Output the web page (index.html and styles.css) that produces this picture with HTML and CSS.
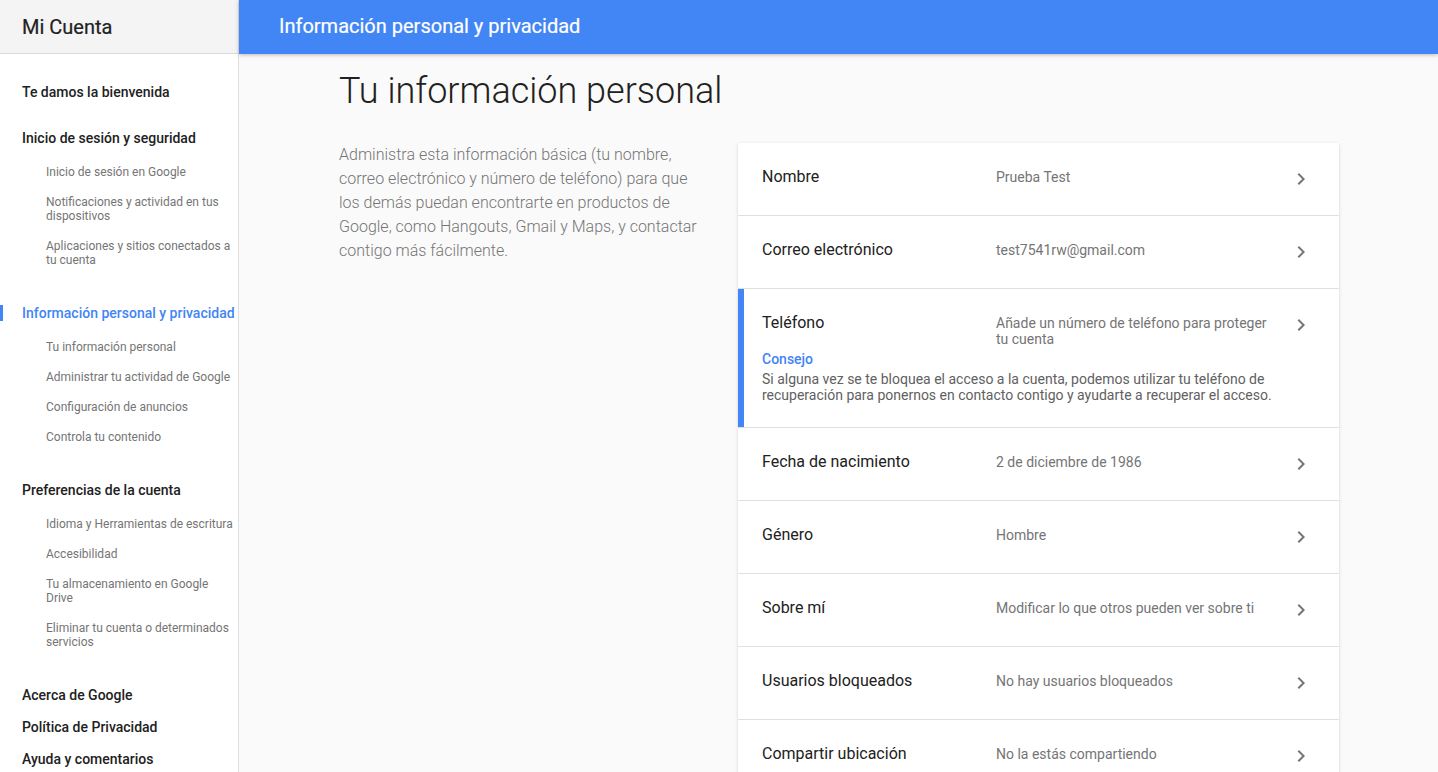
FILE: index.html
```html
<!DOCTYPE html>
<html lang="es">
<head>
<meta charset="utf-8">
<title>Mi Cuenta</title>
<link rel="stylesheet" href="styles.css">
</head>
<body>
<div class="app">
  <aside class="sidebar">
    <div class="brand">Mi Cuenta</div>
    <nav class="nav">
      <div class="group">
        <a class="group-title">Te damos la bienvenida</a>
      </div>
      <div class="group">
        <a class="group-title">Inicio de sesión y seguridad</a>
        <ul class="sub">
          <li>Inicio de sesión en Google</li>
          <li>Notificaciones y actividad en tus dispositivos</li>
          <li>Aplicaciones y sitios conectados a tu cuenta</li>
        </ul>
      </div>
      <div class="group">
        <a class="group-title active">Información personal y privacidad</a>
        <ul class="sub">
          <li>Tu información personal</li>
          <li>Administrar tu actividad de Google</li>
          <li>Configuración de anuncios</li>
          <li>Controla tu contenido</li>
        </ul>
      </div>
      <div class="group">
        <a class="group-title">Preferencias de la cuenta</a>
        <ul class="sub">
          <li>Idioma y Herramientas de escritura</li>
          <li>Accesibilidad</li>
          <li>Tu almacenamiento en Google Drive</li>
          <li>Eliminar tu cuenta o determinados servicios</li>
        </ul>
      </div>
      <div class="group links">
        <a class="group-title">Acerca de Google</a>
        <a class="group-title">Política de Privacidad</a>
        <a class="group-title">Ayuda y comentarios</a>
      </div>
    </nav>
  </aside>
  <div class="main">
    <header class="topbar">Información personal y privacidad</header>
    <div class="content">
      <h1 class="page-title">Tu información personal</h1>
      <div class="columns">
        <p class="intro">Administra esta información básica (tu nombre, correo electrónico y número de teléfono) para que los demás puedan encontrarte en productos de Google, como Hangouts, Gmail y Maps, y contactar contigo más fácilmente.</p>
        <div class="card">
          <div class="row">
            <div class="label">Nombre</div>
            <div class="value">Prueba Test</div>
            <svg class="chev" viewBox="0 0 24 24"><path d="M10 6L8.59 7.41 13.17 12l-4.58 4.59L10 18l6-6z"/></svg>
          </div>
          <div class="row">
            <div class="label">Correo electrónico</div>
            <div class="value">test7541rw@gmail.com</div>
            <svg class="chev" viewBox="0 0 24 24"><path d="M10 6L8.59 7.41 13.17 12l-4.58 4.59L10 18l6-6z"/></svg>
          </div>
          <div class="row highlight">
            <div class="label">Teléfono</div>
            <div class="value">Añade un número de teléfono para proteger tu cuenta</div>
            <svg class="chev" viewBox="0 0 24 24"><path d="M10 6L8.59 7.41 13.17 12l-4.58 4.59L10 18l6-6z"/></svg>
            <div class="tip">
              <div class="tip-title">Consejo</div>
              <div class="tip-text">Si alguna vez se te bloquea el acceso a la cuenta, podemos utilizar tu teléfono de recuperación para ponernos en contacto contigo y ayudarte a recuperar el acceso.</div>
            </div>
          </div>
          <div class="row">
            <div class="label">Fecha de nacimiento</div>
            <div class="value">2 de diciembre de 1986</div>
            <svg class="chev" viewBox="0 0 24 24"><path d="M10 6L8.59 7.41 13.17 12l-4.58 4.59L10 18l6-6z"/></svg>
          </div>
          <div class="row">
            <div class="label">Género</div>
            <div class="value">Hombre</div>
            <svg class="chev" viewBox="0 0 24 24"><path d="M10 6L8.59 7.41 13.17 12l-4.58 4.59L10 18l6-6z"/></svg>
          </div>
          <div class="row">
            <div class="label">Sobre mí</div>
            <div class="value">Modificar lo que otros pueden ver sobre ti</div>
            <svg class="chev" viewBox="0 0 24 24"><path d="M10 6L8.59 7.41 13.17 12l-4.58 4.59L10 18l6-6z"/></svg>
          </div>
          <div class="row">
            <div class="label">Usuarios bloqueados</div>
            <div class="value">No hay usuarios bloqueados</div>
            <svg class="chev" viewBox="0 0 24 24"><path d="M10 6L8.59 7.41 13.17 12l-4.58 4.59L10 18l6-6z"/></svg>
          </div>
          <div class="row">
            <div class="label">Compartir ubicación</div>
            <div class="value">No la estás compartiendo</div>
            <svg class="chev" viewBox="0 0 24 24"><path d="M10 6L8.59 7.41 13.17 12l-4.58 4.59L10 18l6-6z"/></svg>
          </div>
        </div>
      </div>
    </div>
  </div>
</div>
</body>
</html>
```

FILE: styles.css
```css
* { box-sizing: border-box; }
html, body {
  margin: 0;
  padding: 0;
  height: 100%;
  overflow: hidden;
}
body {
  font-family: Roboto, "Liberation Sans", Arial, sans-serif;
  color: #212121;
  background: #fafafa;
}
.app {
  display: flex;
  height: 100vh;
  overflow: hidden;
}
.sidebar {
  width: 239px;
  flex: 0 0 239px;
  background: #fff;
  border-right: 1px solid #e0e0e0;
  display: flex;
  flex-direction: column;
}
.brand {
  height: 54px;
  flex: 0 0 54px;
  background: #f4f4f4;
  border-bottom: 1px solid #dadada;
  padding-left: 22px;
  display: flex;
  align-items: center;
  font-size: 20px;
  font-weight: 400;
  color: #212121;
  padding-top: 1px;
  -webkit-text-stroke: 0.2px #212121;
}
.nav {
  padding-top: 22px;
}
.group {
  margin-bottom: 14px;
}
.group.links { margin-bottom: 0; }
.group-title {
  display: block;
  position: relative;
  padding: 6px 0 6px 22px;
  line-height: 20px;
  font-size: 14px;
  font-weight: 500;
  color: #212121;
  white-space: nowrap;
}
.group-title.active {
  color: #4285f4;
}
.group-title.active::before {
  content: "";
  position: absolute;
  left: 0;
  top: 8px;
  width: 3px;
  height: 16px;
  background: #4285f4;
}
.sub {
  list-style: none;
  margin: 0;
  padding: 3px 0 8px 0;
}
.sub li {
  padding: 8px 4px 8px 46px;
  font-size: 12px;
  line-height: 14px;
  color: #757575;
}
.main {
  flex: 1;
  display: flex;
  flex-direction: column;
  min-width: 0;
}
.topbar {
  height: 54px;
  flex: 0 0 54px;
  background: #4285f4;
  color: #fff;
  font-size: 20px;
  font-weight: 400;
  padding-left: 40px;
  display: flex;
  align-items: center;
  padding-bottom: 2px;
  box-shadow: 0 1px 4px rgba(0,0,0,.25);
  position: relative;
  z-index: 1;
  -webkit-text-stroke: 0.2px #fff;
}
.content {
  padding: 14px 99px 0 100px;
}
.page-title {
  margin: 0 0 29px 0;
  font-size: 36px;
  line-height: 46px;
  font-weight: 300;
  color: #212121;
}
.columns {
  display: grid;
  grid-template-columns: 399px 601px;
}
.intro {
  margin: 0;
  width: 364px;
  font-size: 16px;
  line-height: 24px;
  font-weight: 300;
  color: #757575;
}
.card {
  background: #fff;
  box-shadow: 0 1px 3px rgba(0,0,0,.16);
}
.row {
  display: grid;
  grid-template-columns: 224px 283px 24px;
  column-gap: 10px;
  padding: 22px 26px 24px 24px;
  border-bottom: 1px solid #e0e0e0;
  align-items: start;
}
.row.highlight {
  box-shadow: inset 6px 0 0 #4285f4;
}
.label {
  font-size: 16px;
  line-height: 24px;
  color: #212121;
}
.value {
  font-size: 14px;
  line-height: 16px;
  padding-top: 4px;
  color: #757575;
}
.chev {
  display: block;
  width: 24px;
  height: 24px;
  margin-top: 2px;
  fill: #757575;
}
.tip {
  grid-column: 1 / 4;
  padding-top: 4px;
  padding-right: 20px;
}
.tip-title {
  font-size: 14px;
  line-height: 16px;
  font-weight: 500;
  color: #4285f4;
}
.tip-text {
  margin-top: 4px;
  font-size: 14px;
  line-height: 16px;
  color: #616161;
}
```
